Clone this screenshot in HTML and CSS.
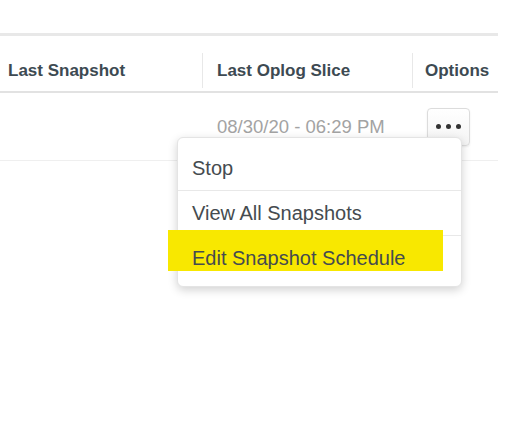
FILE: index.html
```html
<!DOCTYPE html>
<html lang="en">
<head>
    <meta charset="UTF-8">
    <title>Backup Snapshots</title>
    <link rel="stylesheet" href="styles.css">
</head>
<body>

    <div class="panel">
        <div class="table-head">
            <div class="col col-snapshot">Last Snapshot</div>
            <div class="col col-oplog">Last Oplog Slice</div>
            <div class="col col-options">Options</div>
        </div>

        <div class="table-row">
            <div class="cell col-snapshot"></div>
            <div class="cell col-oplog date">08/30/20 - 06:29 PM</div>
            <div class="cell col-options">
                <button class="dots-btn" type="button">
                    <span></span><span></span><span></span>
                </button>
            </div>
        </div>

        <!-- options menu, opened from the ... button -->
        <ul class="menu">
            <li class="menu-item">Stop</li>
            <li class="menu-item">View All Snapshots</li>
            <li class="menu-item">
                <span class="marker"></span>
                <span class="label">Edit Snapshot Schedule</span>
            </li>
        </ul>
    </div>

</body>
</html>
```

FILE: styles.css
```css
body {
    margin: 0;
    background-color: #ffffff;
    font-family: 'Liberation Sans', Arial, sans-serif;
    color: #3d4a52;
}

.panel {
    position: relative;
    width: 498px;
    height: 433px;
    padding-top: 33px;
    box-sizing: border-box;
}

.table-head {
    display: flex;
    border-top: 3px solid #e8e8e8;
    border-bottom: 2px solid #e2e2e2;
    padding: 17px 0 3px;
}

.table-head .col {
    height: 35px;
    display: flex;
    align-items: center;
    font-size: 17px;
    font-weight: bold;
    color: #3d4a52;
}

.col-snapshot {
    width: 202px;
    padding-left: 8px;
    box-sizing: border-box;
}

.col-oplog {
    width: 210px;
    padding-left: 14px;
    box-sizing: border-box;
}

.col-options {
    width: 86px;
    padding-left: 12px;
    box-sizing: border-box;
}

.table-head .col-oplog,
.table-head .col-options {
    border-left: 1px solid #e8e8e8;
}

.table-row {
    display: flex;
    align-items: center;
    height: 67px;
    border-bottom: 1px solid #efefef;
}

.date {
    padding-left: 15px;
    font-size: 18.5px;
    color: #a3a3a3;
}

.table-row .col-options {
    padding-left: 15px;
}

.dots-btn {
    display: flex;
    align-items: center;
    justify-content: center;
    gap: 5px;
    width: 43px;
    height: 38px;
    padding: 0;
    border: 1px solid #dcdcdc;
    border-radius: 4px;
    background: linear-gradient(#ffffff, #f4f4f4);
    box-shadow: 0 1px 2px rgba(0, 0, 0, 0.08);
}

.dots-btn span {
    width: 5px;
    height: 5px;
    border-radius: 50%;
    background-color: #333333;
}

.menu {
    position: absolute;
    left: 177px;
    top: 137px;
    width: 285px;
    margin: 0;
    padding: 8px 0 6px;
    list-style: none;
    background-color: #ffffff;
    border: 1px solid #e4e4e4;
    border-radius: 6px;
    box-shadow: 0 3px 10px rgba(0, 0, 0, 0.18);
    box-sizing: border-box;
}

.menu-item {
    position: relative;
    height: 44px;
    display: flex;
    align-items: center;
    padding-left: 14px;
    font-size: 20px;
    color: #454b4f;
}

.menu-item + .menu-item {
    border-top: 1px solid #e8e8e8;
}

.marker {
    position: absolute;
    left: -10px;
    top: -6px;
    width: 275px;
    height: 41px;
    background-color: #f8e800;
}

.label {
    position: relative;
}
```
